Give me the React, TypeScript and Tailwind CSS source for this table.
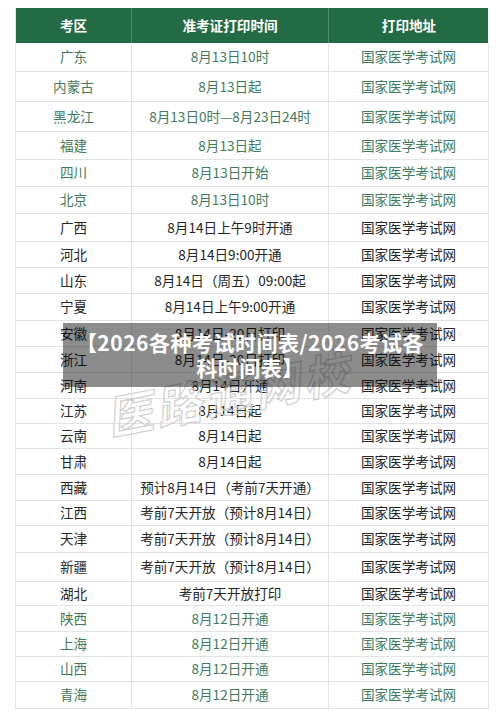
const rows: { area: string; time: string; h: string; green: boolean }[] = [
  { area: '广东', time: '8月13日10时', h: 'h-[29px]', green: true },
  { area: '内蒙古', time: '8月13日起', h: 'h-[30px]', green: true },
  { area: '黑龙江', time: '8月13日0时—8月23日24时', h: 'h-[30px]', green: true },
  { area: '福建', time: '8月13日起', h: 'h-[28px]', green: true },
  { area: '四川', time: '8月13日开始', h: 'h-[27px]', green: true },
  { area: '北京', time: '8月13日10时', h: 'h-[27px]', green: true },
  { area: '广西', time: '8月14日上午9时开通', h: 'h-[28px]', green: false },
  { area: '河北', time: '8月14日9:00开通', h: 'h-[26px]', green: false },
  { area: '山东', time: '8月14日（周五）09:00起', h: 'h-[26px]', green: false },
  { area: '宁夏', time: '8月14日上午9:00开通', h: 'h-[27px]', green: false },
  { area: '安徽', time: '8月14日-20日打印', h: 'h-[26px]', green: false },
  { area: '浙江', time: '8月14日-20日打印', h: 'h-[26px]', green: false },
  { area: '河南', time: '8月14日开通', h: 'h-[26px]', green: false },
  { area: '江苏', time: '8月14日起', h: 'h-[25px]', green: false },
  { area: '云南', time: '8月14日起', h: 'h-[25px]', green: false },
  { area: '甘肃', time: '8月14日起', h: 'h-[26px]', green: false },
  { area: '西藏', time: '预计8月14日（考前7天开通）', h: 'h-[26px]', green: false },
  { area: '江西', time: '考前7天开放（预计8月14日）', h: 'h-[25px]', green: false },
  { area: '天津', time: '考前7天开放（预计8月14日）', h: 'h-[27px]', green: false },
  { area: '新疆', time: '考前7天开放（预计8月14日）', h: 'h-[29px]', green: false },
  { area: '湖北', time: '考前7天开放打印', h: 'h-[24px]', green: false },
  { area: '陕西', time: '8月12日开通', h: 'h-[26px]', green: true },
  { area: '上海', time: '8月12日开通', h: 'h-[25px]', green: true },
  { area: '山西', time: '8月12日开通', h: 'h-[25px]', green: true },
  { area: '青海', time: '8月12日开通', h: 'h-[27px]', green: true },
];

const cell =
  'flex items-center justify-center border-r border-b border-[#e3e3e3] text-[13.6px] leading-none';

export default function App() {
  return (
    <div className="relative h-[712px] w-[500px] overflow-hidden bg-white pt-[8px] font-['Noto_Sans_CJK_SC',sans-serif]">
      <div className="ml-[15px] w-[473px] border-l border-[#e3e3e3]">
        <div className="grid h-[35px] grid-cols-[116px_197px_160px] bg-[#236b45] text-[13.6px] font-bold text-white">
          <div className="flex items-center justify-center border-r border-[#4d8a69]">考区</div>
          <div className="flex items-center justify-center border-r border-[#4d8a69]">准考证打印时间</div>
          <div className="flex items-center justify-center">打印地址</div>
        </div>
        {rows.map(r => (
          <div
            key={r.area}
            className={`grid grid-cols-[116px_197px_160px] ${r.h} ${r.green ? 'text-[#3f7c5b]' : 'text-[#262626]'}`}
          >
            <div className={cell}>{r.area}</div>
            <div className={cell}>{r.time}</div>
            <div className={cell}>国家医学考试网</div>
          </div>
        ))}
      </div>

      {/* watermark */}
      <div className="pointer-events-none absolute left-[104px] top-[358px] -rotate-[11deg] text-[46px] font-bold italic tracking-[4px] text-transparent [-webkit-text-stroke:1.2px_#cfcfcf]">
        医路通网校
      </div>

      {/* title overlay */}
      <div className="absolute left-[63px] top-[323px] flex h-[64px] w-[374px] items-center justify-center bg-black/45 px-[12px] text-center text-[21px] font-bold leading-[25px] tracking-[0.5px] text-white">
        【2026各种考试时间表/2026考试各科时间表】
      </div>
    </div>
  );
}
